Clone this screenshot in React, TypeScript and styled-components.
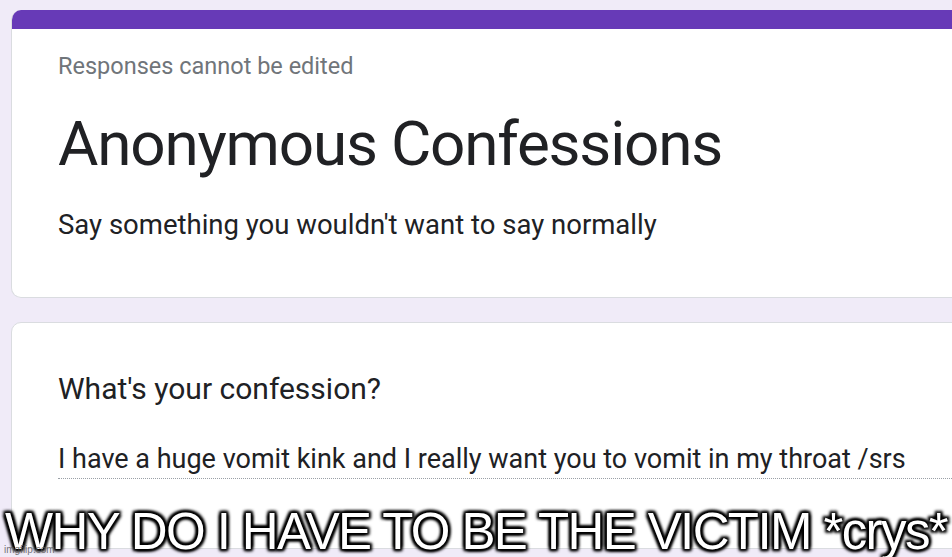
import React from 'react';
import styled, { createGlobalStyle } from 'styled-components';

const GlobalStyle = createGlobalStyle`
  html, body {
    margin: 0;
    padding: 0;
    background: #f0ebf8;
  }
  body {
    font-family: Roboto, "Noto Sans", Arial, sans-serif;
    overflow: hidden;
  }
`;

const Page = styled.div`
  position: relative;
  width: 952px;
  height: 557px;
  overflow: hidden;
  background: #f0ebf8;
  padding: 10px 0 0 11px;
  box-sizing: border-box;
  display: flex;
  flex-direction: column;
  gap: 24px;
`;

const Card = styled.div<{ $height: number; $accent?: boolean }>`
  width: 1000px;
  height: ${p => p.$height}px;
  flex: none;
  box-sizing: border-box;
  background: #fff;
  border: 1px solid #dadce0;
  border-radius: 10px;
  overflow: hidden;
  display: flex;
  flex-direction: column;
  ${p => p.$accent && `border-top: none;`}
`;

const Stripe = styled.div`
  height: 19px;
  background: #673ab7;
  flex: none;
`;

const CardBody = styled.div<{ $pt: number }>`
  padding: ${p => p.$pt}px 0 0 46px;
  display: flex;
  flex-direction: column;
`;

const Notice = styled.div`
  font-size: 23.5px;
  color: #70757a;
  line-height: 1;
`;

const Title = styled.h1`
  margin: 34px 0 0;
  font-size: 62px;
  font-weight: 400;
  color: #202124;
  line-height: 1;
  letter-spacing: -1.2px;
`;

const Description = styled.div`
  margin-top: 36px;
  font-size: 27.5px;
  color: #202124;
  line-height: 1;
`;

const Question = styled.div`
  font-size: 30px;
  color: #202124;
  line-height: 1;
`;

const Answer = styled.div`
  margin-top: 42px;
  width: 920px;
  font-size: 27px;
  color: #202124;
  line-height: 1;
  padding-bottom: 5px;
  border-bottom: 1px dotted #9aa0a6;
`;

const Caption = styled.div`
  position: absolute;
  left: 0;
  right: 0;
  bottom: 0;
  text-align: center;
  font-family: "Liberation Sans", Arial, sans-serif;
  font-size: 51px;
  line-height: 1;
  color: #fff;
  white-space: nowrap;
  letter-spacing: -1.6px;
  text-shadow:
    0 0 2px #000, 0 0 3px #000, 0 0 4px #000, 0 0 5px #000,
    2px 2px 3px #000, -2px -2px 3px #000,
    2px -2px 3px #000, -2px 2px 3px #000;
`;

const Watermark = styled.div`
  position: absolute;
  left: 4px;
  bottom: 2px;
  font-family: "Liberation Sans", Arial, sans-serif;
  font-size: 10px;
  color: rgba(90, 90, 90, 0.85);
`;

export default function App() {
  return (
    <>
      <GlobalStyle />
      <Page>
        <Card $height={288} $accent>
          <Stripe />
          <CardBody $pt={26}>
            <Notice>Responses cannot be edited</Notice>
            <Title>Anonymous Confessions</Title>
            <Description>Say something you wouldn't want to say normally</Description>
          </CardBody>
        </Card>
        <Card $height={227}>
          <CardBody $pt={51}>
            <Question>What's your confession?</Question>
            <Answer>I have a huge vomit kink and I really want you to vomit in my throat /srs</Answer>
          </CardBody>
        </Card>
        <Caption>WHY DO I HAVE TO BE THE VICTIM *crys*</Caption>
        <Watermark>imgflip.com</Watermark>
      </Page>
    </>
  );
}
